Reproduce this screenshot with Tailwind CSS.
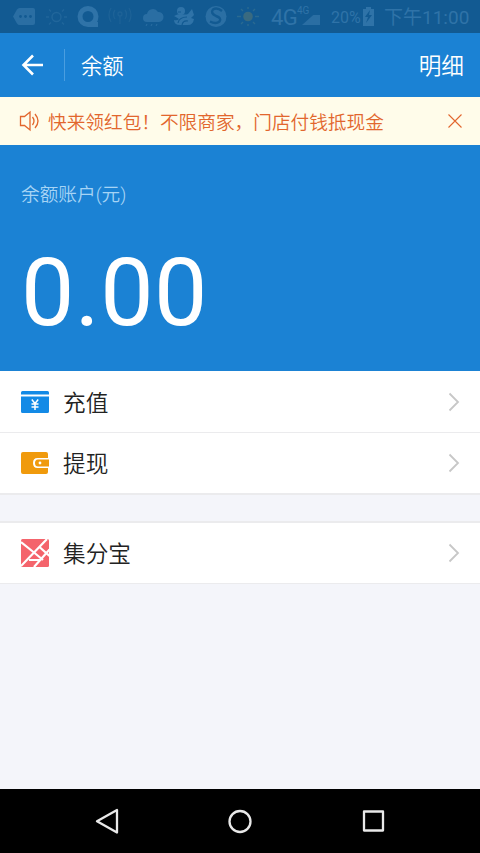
<!DOCTYPE html>
<html lang="zh-CN">
<head>
<meta charset="utf-8">
<title>余额</title>
<script src="https://cdn.jsdelivr.net/npm/@tailwindcss/browser@4"></script>
</head>
<body class="w-[480px] h-[853px] overflow-hidden flex flex-col bg-[#f4f5fa] font-['Roboto','Noto_Sans_CJK_SC',sans-serif]">
<!-- status bar -->
<div class="h-[33px] shrink-0 flex items-center bg-[#125a92] text-[#2f73a8] overflow-hidden">
  <svg class="shrink-0" width="271" height="33" viewBox="0 0 271 33" fill="none" stroke="none">
    <path d="M13 16.500l4-7q1-1.500 2.500-1.500H33q2 0 2 2v13q0 2-2 2H19.500q-1.500 0-2.500-1.500z" fill="#2a6ea3"/>
    <g fill="#125a92"><circle cx="20.500" cy="16.500" r="1.400"/><circle cx="25.500" cy="16.500" r="1.400"/><circle cx="30.500" cy="16.500" r="1.400"/></g>
    <g stroke="#21669b" stroke-width="1.400"><circle cx="56.500" cy="17" r="4.500"/><path d="M46 17h3M64 17h3M49 9.500l2 2M64 9.500l-2 2M49 24.500l2-2M64 24.500l-2-2"/></g>
    <circle cx="88" cy="16.500" r="8" stroke="#2f73a8" stroke-width="5"/><path d="M88 22h10v5H88z" fill="#2f73a8"/>
    <g stroke="#1d6297" stroke-width="1.300"><circle cx="120" cy="14" r="2"/><path d="M120 16v8M115 10q-3 4 0 9M125 10q3 4 0 9M111 8q-4 7 0 14M129 8q4 7 0 14"/></g>
    <path d="M147 22a4 4 0 0 1 0-8 6 6 0 0 1 11-2 5 5 0 0 1 1 10z" fill="#2a6ea3"/><path d="M147 24l-1 2M152 24l-1 2M157 24l-1 2" stroke="#2a6ea3"/>
    <circle cx="181" cy="11" r="4" fill="#2f73a8"/><path d="M174 16q3-2 7-2 4 1 7 0l4-5 2 6-3 3 3 1q-1 6-6 6H180q-6 0-6-5 3 1 5-1-3-2-5-3z" fill="#2f73a8"/><path d="M178 23q1-6 9-6M182 25q1-5 6-4M178 12h3" stroke="#125a92" stroke-width="1.200"/>
    <circle cx="216" cy="16.500" r="10.500" fill="#2b6fa4"/><path d="M222 11q-5-4-9-1.500-3 3.500 3 6.500 6 2 3.500 5.500-3.500 3-9.500 0" stroke="#125a92" stroke-width="2.400"/>
    <circle cx="248" cy="16.500" r="4.800" fill="#396a80"/><path d="M237 16.500h4M255 16.500h4M248 7v2M248 24v2M241 9l2 2M255 9l-2 2M241 24l2-2M255 24l-2-2" stroke="#2a6a91" stroke-width="1.400"/>
  </svg>
  <span class="w-[26px] shrink-0 text-[22px] leading-[33px] tracking-[-0.5px] pt-[2px]">4G</span>
  <div class="w-[34px] shrink-0 h-[33px] flex flex-col">
    <span class="text-[10px] leading-[10px] h-[9px] mt-[6px]">4G</span>
    <svg class="ml-[5px]" width="18" height="10" viewBox="0 0 18 10"><path d="M0 10L18-6V10z" fill="#2a6ea3"/></svg>
  </div>
  <span class="w-[30px] shrink-0 text-[16px] leading-[33px] pt-[2px]">20%</span>
  <svg class="shrink-0" width="15" height="33" viewBox="0 0 15 33"><path d="M5 7h5v2h3v17H2V9h3z" fill="#2f73a8"/><path d="M9 10l-5 7h3l-2 6 6-8H8z" fill="#125a92"/></svg>
  <span class="ml-[8px] pt-[2px] shrink-0 text-[19px] leading-[33px] whitespace-nowrap">下午11:00</span>
</div>
<!-- title bar -->
<div class="h-[64px] shrink-0 flex items-center bg-[#1b82d4] pl-[21px] pr-[16px] text-white">
  <svg width="24" height="24" viewBox="0 0 24 24" fill="none" stroke="#fff" stroke-width="2.600"><path d="M12 2.500L2.500 12l9.500 9.500M2.500 12H22"/></svg>
  <div class="w-px h-[32px] ml-[19px] bg-[#4a9ee0]"></div>
  <div class="ml-[16px] pt-[3px] text-[21.330px] leading-[30px] font-[350]">余额</div>
  <div class="ml-auto pt-[4px] text-[22.670px] leading-[30px] font-[350]">明细</div>
</div>
<!-- notice -->
<div class="h-[48px] shrink-0 flex items-center bg-[#fffcea] pl-[19px] pr-[18px] text-[#e2662d]">
  <svg width="22" height="22" viewBox="0 0 22 22" fill="none" stroke="#e2662d" stroke-width="1.300"><path d="M1.500 6.500h4L11 2v18l-5.500-4.500h-4z"/><path d="M13.500 7q3 4 0 8M16 4q6 7 0 14"/></svg>
  <div class="ml-[7px] pt-[3px] text-[18.670px] leading-[28px] font-[350] whitespace-nowrap">快来领红包！不限商家，门店付钱抵现金</div>
  <svg class="ml-auto" width="14" height="14" viewBox="0 0 14 14" fill="none" stroke="#e2662d" stroke-width="1.100"><path d="M.5.500l13 13M13.500.500l-13 13"/></svg>
</div>
<!-- balance -->
<div class="h-[226px] shrink-0 bg-[#1b82d4] pl-[21px] pt-[36px] text-white">
  <div class="text-[18.670px] leading-[28px] font-[350] text-[#a6d4f5]">余额账户(元)</div>
  <div class="mt-[28px] text-[95px] leading-[112px] tracking-[0.4px]">0.00</div>
</div>
<!-- actions -->
<div class="shrink-0 bg-white border-b-2 border-[#ebebed] text-[22.670px] font-[350] text-[#222]">
  <div class="h-[62px] flex items-center pl-[21px] pr-[20px] border-b border-[#ebebed]">
    <svg width="28" height="22" viewBox="0 0 28 22"><path d="M0 3.500V1.500Q0 0 1.500 0h25Q28 0 28 1.500v2zM0 5.500h28v15q0 1.500-1.500 1.500h-25Q0 22 0 20.500z" fill="#138ae6"/><path d="M10.800 8.500l3.200 4 3.200-4M10.500 13h7M10.500 16h7M14 12.500V19" fill="none" stroke="#fff" stroke-width="1.500"/></svg>
    <span class="ml-[14px] pt-[4px]">充值</span>
    <svg class="ml-auto" width="12" height="20" viewBox="0 0 12 20" fill="none" stroke="#c7c7c7" stroke-width="1.800"><path d="M1.500 1.500L10 10l-8.500 8.500"/></svg>
  </div>
  <div class="h-[60px] flex items-center pl-[21px] pr-[20px]">
    <svg width="28" height="22" viewBox="0 0 28 22"><path d="M2 0h23q2 0 2 2v4H16.500Q12 6 12 11t4.500 5H27v4q0 2-2 2H2q-2 0-2-2V2Q0 0 2 0z" fill="#f09a0c"/><path d="M17 7.500h11v7H17q-3 0-3-3.500t3-3.500z" fill="#f09a0c"/><circle cx="19" cy="11" r="1.400" fill="#fff"/></svg>
    <span class="ml-[14px] pt-[4px]">提现</span>
    <svg class="ml-auto" width="12" height="20" viewBox="0 0 12 20" fill="none" stroke="#c7c7c7" stroke-width="1.800"><path d="M1.500 1.500L10 10l-8.500 8.500"/></svg>
  </div>
</div>
<div class="mt-[26px] mb-auto shrink-0 bg-white border-t-2 border-[#ebebed] text-[22.670px] font-[350] text-[#222]">
  <div class="h-[61px] flex items-center pl-[21px] pr-[20px] border-b border-[#ebebed]">
    <svg width="28" height="28" viewBox="0 0 28 28"><rect width="28" height="28" rx="1.500" fill="#f4646c"/><path d="M0 3L13 13.500L22 21M26 0L0 27M19 8.500L28.500 17M28.500 10.500L13 28M8 21H19" fill="none" stroke="#fff" stroke-width="2.200"/></svg>
    <span class="ml-[14px] pt-[4px]">集分宝</span>
    <svg class="ml-auto" width="12" height="20" viewBox="0 0 12 20" fill="none" stroke="#c7c7c7" stroke-width="1.800"><path d="M1.500 1.500L10 10l-8.500 8.500"/></svg>
  </div>
</div>
<!-- navigation -->
<div class="h-[64px] shrink-0 bg-black flex items-center justify-between pl-[95px] pr-[95px]">
  <svg width="24" height="26" viewBox="0 0 24 26" fill="none" stroke="#e9e9e9" stroke-width="2.300" stroke-linejoin="round"><path d="M22 2v22.500L2 13.200z"/></svg>
  <svg width="26" height="26" viewBox="0 0 26 26" fill="none" stroke="#e9e9e9" stroke-width="2.300"><circle cx="13" cy="13.500" r="10.500"/></svg>
  <svg width="24" height="24" viewBox="0 0 24 24" fill="none" stroke="#e9e9e9" stroke-width="2.300" stroke-linejoin="round"><path d="M3 2.500h19v19H3z"/></svg>
</div>
</body>
</html>
